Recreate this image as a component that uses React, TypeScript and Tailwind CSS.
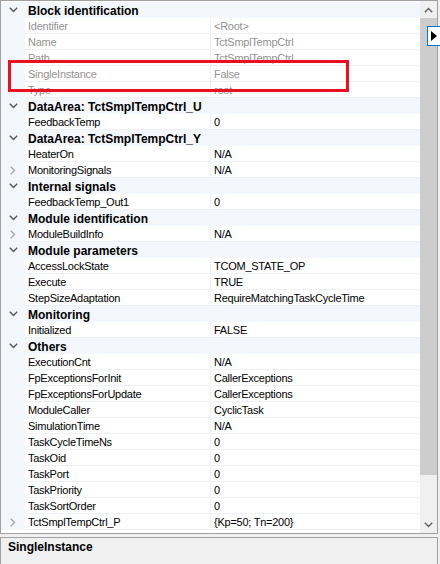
import React from "react";

type Row =
  | { c: string }
  | { n: string; v: string; ro?: boolean; ex?: boolean };

const rows: Row[] = [
  { c: "Block identification" },
  { n: "Identifier", v: "<Root>", ro: true },
  { n: "Name", v: "TctSmplTempCtrl", ro: true },
  { n: "Path", v: "TctSmplTempCtrl", ro: true },
  { n: "SingleInstance", v: "False", ro: true },
  { n: "Type", v: "root", ro: true },
  { c: "DataArea: TctSmplTempCtrl_U" },
  { n: "FeedbackTemp", v: "0" },
  { c: "DataArea: TctSmplTempCtrl_Y" },
  { n: "HeaterOn", v: "N/A" },
  { n: "MonitoringSignals", v: "N/A", ex: true },
  { c: "Internal signals" },
  { n: "FeedbackTemp_Out1", v: "0" },
  { c: "Module identification" },
  { n: "ModuleBuildInfo", v: "N/A", ex: true },
  { c: "Module parameters" },
  { n: "AccessLockState", v: "TCOM_STATE_OP" },
  { n: "Execute", v: "TRUE" },
  { n: "StepSizeAdaptation", v: "RequireMatchingTaskCycleTime" },
  { c: "Monitoring" },
  { n: "Initialized", v: "FALSE" },
  { c: "Others" },
  { n: "ExecutionCnt", v: "N/A" },
  { n: "FpExceptionsForInit", v: "CallerExceptions" },
  { n: "FpExceptionsForUpdate", v: "CallerExceptions" },
  { n: "ModuleCaller", v: "CyclicTask" },
  { n: "SimulationTime", v: "N/A" },
  { n: "TaskCycleTimeNs", v: "0" },
  { n: "TaskOid", v: "0" },
  { n: "TaskPort", v: "0" },
  { n: "TaskPriority", v: "0" },
  { n: "TaskSortOrder", v: "0" },
  { n: "TctSmplTempCtrl_P", v: "{Kp=50; Tn=200}", ex: true },
];

function Down({ color = "#555" }: { color?: string }) {
  return (
    <svg width="9" height="6" viewBox="0 0 9 6">
      <path d="M0.8 0.8 L4.5 4.5 L8.2 0.8" fill="none" stroke={color} strokeWidth="1.4" />
    </svg>
  );
}

function Right() {
  return (
    <svg width="6" height="9" viewBox="0 0 6 9">
      <path d="M0.8 0.8 L4.5 4.5 L0.8 8.2" fill="none" stroke="#a8a8a8" strokeWidth="1.4" />
    </svg>
  );
}

function Up() {
  return (
    <svg width="9" height="6" viewBox="0 0 9 6">
      <path d="M0.8 5.2 L4.5 1.5 L8.2 5.2" fill="none" stroke="#606060" strokeWidth="1.4" />
    </svg>
  );
}

export default function App() {
  return (
    <div className="relative w-[440px] h-[564px] overflow-hidden bg-[#f0f0f0] font-['Liberation_Sans',Arial,sans-serif] text-black">
      <div className="flex h-[534px] w-[438px] border border-[#a0a0a0] bg-white">
        <div className="flex flex-1 flex-col pt-px">
          {rows.map((r, i) =>
            "c" in r ? (
              <div key={i} className="flex h-[16px] shrink-0 items-center bg-[#f3f6fb]">
                <div className="flex w-[24px] shrink-0 items-center justify-center pl-[1px]">
                  <Down />
                </div>
                <div className="pl-[3px] pt-px text-[12px] font-bold leading-[16px] whitespace-nowrap">{r.c}</div>
              </div>
            ) : (
              <div key={i} className="flex h-[16px] shrink-0">
                <div className="flex w-[24px] shrink-0 items-center justify-center bg-[#f3f6fb]">
                  {r.ex ? <Right /> : null}
                </div>
                <div
                  className={`w-[186px] shrink-0 border-b border-r border-[#edf0f5] pl-[3px] pt-px text-[11px] leading-[14px] tracking-[-0.25px] whitespace-nowrap ${
                    r.ro ? "text-[#939393]" : "text-black"
                  }`}
                >
                  {r.n}
                </div>
                <div
                  className={`flex-1 border-b border-[#edf0f5] pl-[3px] pt-px text-[11px] leading-[14px] tracking-[-0.25px] whitespace-nowrap ${
                    r.ro ? "text-[#939393]" : "text-black"
                  }`}
                >
                  {r.v}
                </div>
              </div>
            )
          )}
        </div>
        <div className="flex w-[17px] shrink-0 flex-col bg-[#f0f0f0]">
          <div className="flex h-[17px] items-center justify-center">
            <Up />
          </div>
          <div className="h-[457px] bg-[#cdcdcd]" />
          <div className="flex-1" />
          <div className="flex h-[17px] items-center justify-center">
            <Down color="#606060" />
          </div>
        </div>
      </div>

      <div className="mt-[3px] h-[40px] w-[438px] border border-[#a0a0a0] bg-[#f0f0f0] px-[7px] pt-[1px]">
        <div className="text-[12px] font-bold leading-[16px]">SingleInstance</div>
      </div>

      <div className="absolute left-[8px] top-[60px] h-[32px] w-[341px] border-[3px] border-[#e81123]" />

      <div className="absolute left-[427px] top-[26px] flex h-[20px] w-[16px] items-center border border-r-0 border-[#0078d7] bg-white pl-[3px]">
        <svg width="6" height="10" viewBox="0 0 6 10">
          <path d="M0 0 L6 5 L0 10 Z" fill="#000" />
        </svg>
      </div>
    </div>
  );
}
